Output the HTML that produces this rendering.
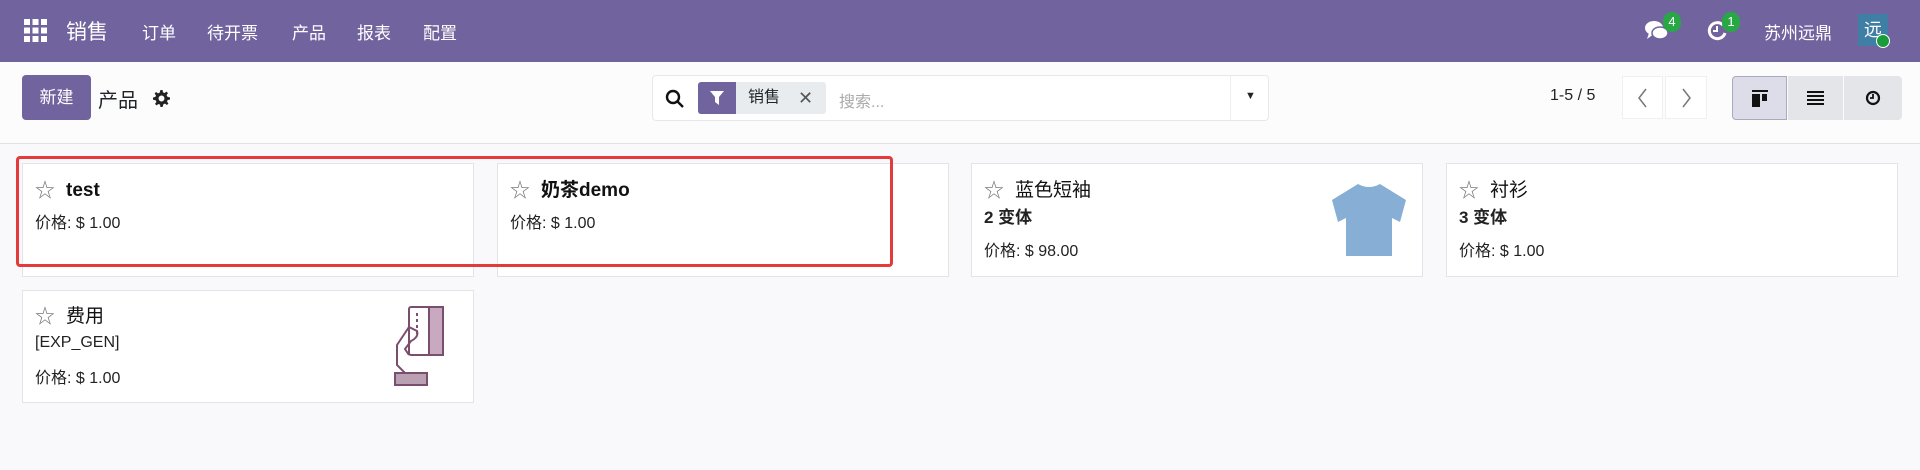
<!DOCTYPE html>
<html><head><meta charset="utf-8"><style>
*{box-sizing:border-box;margin:0;padding:0}
body{width:1920px;height:470px;background:#f9f9fb;font-family:"Liberation Sans","Noto Sans CJK SC",sans-serif;color:#212529;position:relative;overflow:hidden}
.nav{position:absolute;left:0;top:0;width:1920px;height:62px;background:#71639e;color:#fff}
.abs{position:absolute}
.nav .m{position:absolute;top:19px;font-size:17px}
.cp{position:absolute;left:0;top:62px;width:1920px;height:82px;background:#fcfcfd;border-bottom:1px solid #dee2e6}
.card{position:absolute;background:#fff;border:1px solid #e2e4e8}
.star{position:absolute;left:12px;font-size:20px;color:#777;line-height:24px}
.title{position:absolute;left:43px;font-size:19px;font-weight:bold;color:#111;line-height:24px}
.txt{position:absolute;left:12px;font-size:16px;color:#222;line-height:20px}
.badge{position:absolute;width:18px;height:20px;border-radius:9px;background:#28a745;color:#fff;font-size:13px;text-align:center;line-height:20px}
</style></head><body>
<div class="nav">
 <svg class="abs" style="left:24px;top:19px" width="23" height="23" viewBox="0 0 23 23" fill="#fff">
  <rect x="0" y="0" width="6" height="6"/><rect x="8.5" y="0" width="6" height="6"/><rect x="17" y="0" width="6" height="6"/>
  <rect x="0" y="8.5" width="6" height="6"/><rect x="8.5" y="8.5" width="6" height="6"/><rect x="17" y="8.5" width="6" height="6"/>
  <rect x="0" y="17" width="6" height="6"/><rect x="8.5" y="17" width="6" height="6"/><rect x="17" y="17" width="6" height="6"/></svg>
 <div class="m" style="left:66px;top:16px;font-size:21px">销售</div>
 <div class="m" style="left:142px">订单</div>
 <div class="m" style="left:207px">待开票</div>
 <div class="m" style="left:292px">产品</div>
 <div class="m" style="left:357px">报表</div>
 <div class="m" style="left:423px">配置</div>
 <svg class="abs" style="left:1645px;top:20px" width="24" height="22" viewBox="0 0 24 22" fill="#fff"><ellipse cx="9" cy="8" rx="9" ry="7"/><path d="M4 13 L2 19 L9 14Z"/><ellipse cx="15" cy="13" rx="8" ry="6" fill="#fff" stroke="#71639e" stroke-width="1.5"/></svg>
 <div class="badge" style="left:1663px;top:12px">4</div>
 <svg class="abs" style="left:1706px;top:20px" width="22" height="22" viewBox="0 0 22 22" fill="none" stroke="#fff" stroke-width="3"><path d="M17 5 A8 8 0 1 0 19 13"/><path d="M11 6 V11 H7" stroke-width="2"/></svg>
 <div class="badge" style="left:1722px;top:12px">1</div>
 <div class="m" style="left:1764px">苏州远鼎</div>
 <div class="abs" style="left:1858px;top:14px;width:30px;height:32px;background:#3f7fa5;color:#fff;font-size:18px;text-align:center;line-height:32px">远</div>
 <div class="abs" style="left:1876px;top:34px;width:14px;height:14px;border-radius:50%;background:#1a9c3a;border:1.5px solid #fff"></div>
</div>
<div class="cp">
 <div class="abs" style="left:22px;top:13px;width:69px;height:45px;background:#71639e;border-radius:4px;color:#fff;font-size:17px;text-align:center;line-height:45px">新建</div>
 <div class="abs" style="left:98px;top:22px;font-size:20px">产品</div>
 <svg class="abs" style="left:153px;top:28px" width="17" height="17" viewBox="0 0 16 16" fill="#222"><path d="M7 0h2l.4 2.2 1.5.6 1.8-1.3 1.4 1.4-1.3 1.8.6 1.5L16 7v2l-2.2.4-.6 1.5 1.3 1.8-1.4 1.4-1.8-1.3-1.5.6L9 16H7l-.4-2.2-1.5-.6-1.8 1.3-1.4-1.4 1.3-1.8-.6-1.5L0 9V7l2.2-.4.6-1.5L1.5 3.3l1.4-1.4 1.8 1.3 1.5-.6zM8 5.2A2.8 2.8 0 1 0 8 10.8 2.8 2.8 0 1 0 8 5.2z"/></svg>
 <div class="abs" style="left:652px;top:13px;width:617px;height:46px;background:#fff;border:1px solid #e6e8eb;border-radius:4px">
  <svg class="abs" style="left:12px;top:13px" width="20" height="20" viewBox="0 0 20 20" fill="none" stroke="#111" stroke-width="2.4"><circle cx="8" cy="8" r="6"/><path d="M12.5 12.5 L18 18"/></svg>
  <div class="abs" style="left:45px;top:6px;width:38px;height:32px;background:#71639e;border-radius:3px 0 0 3px"><svg class="abs" style="left:12px;top:9px" width="14" height="14" viewBox="0 0 14 14" fill="#fff"><path d="M0 0H14L9 6V14L5 11V6Z"/></svg></div>
  <div class="abs" style="left:83px;top:6px;width:90px;height:32px;background:#e9ecef;border-radius:0 3px 3px 0;font-size:16px;line-height:32px;padding-left:12px">销售 <span style="position:absolute;left:62px;color:#555;font-size:18px">✕</span></div>
  <div class="abs" style="left:186px;top:12px;font-size:16px;color:#aaa">搜索...</div>
  <div class="abs" style="left:577px;top:0;width:1px;height:44px;background:#eceef0"></div>
  <div class="abs" style="left:592px;top:14px;font-size:11px">▼</div>
 </div>
 <div class="abs" style="left:1550px;top:25px;font-size:16px">1-5 / 5</div>
 <div class="abs" style="left:1622px;top:14px;width:41px;height:43px;background:#fff;border:1px solid #f0f0f2"><svg class="abs" style="left:14px;top:11px" width="10" height="20" viewBox="0 0 10 20" fill="none" stroke="#777" stroke-width="1.5"><path d="M9 1 L2 10 L9 19"/></svg></div>
 <div class="abs" style="left:1665px;top:14px;width:42px;height:43px;background:#fff;border:1px solid #f0f0f2"><svg class="abs" style="left:16px;top:11px" width="10" height="20" viewBox="0 0 10 20" fill="none" stroke="#777" stroke-width="1.5"><path d="M1 1 L8 10 L1 19"/></svg></div>
 <div class="abs" style="left:1732px;top:14px;width:55px;height:44px;background:#dcdde8;border:1px solid #a9a9c0;border-radius:4px 0 0 4px"><svg class="abs" style="left:19px;top:13px" width="16" height="17" viewBox="0 0 16 17" fill="#111"><rect width="16" height="2"/><rect y="4" width="8" height="13"/><rect x="10" y="4" width="5" height="7"/></svg></div>
 <div class="abs" style="left:1788px;top:14px;width:55px;height:44px;background:#e3e5e9"><svg class="abs" style="left:19px;top:15px" width="17" height="14" viewBox="0 0 17 14" fill="#111"><rect width="17" height="2"/><rect y="4" width="17" height="2"/><rect y="8" width="17" height="2"/><rect y="12" width="17" height="2"/></svg></div>
 <div class="abs" style="left:1844px;top:14px;width:58px;height:44px;background:#e3e5e9;border-radius:0 4px 4px 0"><svg class="abs" style="left:21px;top:14px" width="16" height="16" viewBox="0 0 16 16" fill="none" stroke="#111" stroke-width="2.2"><circle cx="8" cy="8" r="6"/><path d="M8 4V8H5" stroke-width="1.8"/></svg></div>
</div>

<div class="card" style="left:22px;top:163px;width:452px;height:114px"><div class="star" style="top:15px">☆</div><div class="title" style="top:15px">test</div><div class="txt" style="top:50px">价格: $ 1.00</div></div>
<div class="card" style="left:497px;top:163px;width:452px;height:114px"><div class="star" style="top:15px">☆</div><div class="title" style="top:15px">奶茶demo</div><div class="txt" style="top:50px">价格: $ 1.00</div></div>
<div class="card" style="left:971px;top:163px;width:452px;height:114px"><div class="star" style="top:15px">☆</div><div class="title" style="top:15px;font-weight:normal">蓝色短袖</div><div class="txt" style="top:44px;font-weight:bold;font-size:17px">2 变体</div><div class="txt" style="top:78px">价格: $ 98.00</div>
 <svg class="abs" style="left:358px;top:20px" width="78" height="72" viewBox="0 0 78 72"><path d="M28 0 Q39 6 50 0 L76 16 L70 38 L62 34 L62 72 L16 72 L16 34 L8 38 L2 16 Z" fill="#87aed4"/></svg></div>
<div class="card" style="left:1446px;top:163px;width:452px;height:114px"><div class="star" style="top:15px">☆</div><div class="title" style="top:15px;font-weight:normal">衬衫</div><div class="txt" style="top:44px;font-weight:bold;font-size:17px">3 变体</div><div class="txt" style="top:78px">价格: $ 1.00</div></div>
<div class="card" style="left:22px;top:290px;width:452px;height:113px"><div class="star" style="top:14px">☆</div><div class="title" style="top:14px;font-weight:normal">费用</div><div class="txt" style="top:42px">[EXP_GEN]</div><div class="txt" style="top:78px">价格: $ 1.00</div>
 <svg class="abs" style="left:368px;top:14px" width="56" height="82" viewBox="0 0 56 82" fill="none" stroke="#7a4f6e" stroke-width="2"><rect x="18" y="2" width="34" height="48" rx="2" fill="#fff"/><rect x="38" y="2" width="14" height="48" fill="#c8a9bf"/><path d="M26 8V30" stroke-dasharray="3 3"/><path d="M18 22 L6 40 V60 L14 68 H36 M18 50 L14 44 L20 36 Q28 32 26 26 L18 22"/><rect x="4" y="68" width="32" height="12" fill="#b9a0b3"/></svg></div>

<div class="abs" style="left:16px;top:156px;width:877px;height:111px;border:3px solid #e53a3a;border-radius:4px"></div>
</body></html>
